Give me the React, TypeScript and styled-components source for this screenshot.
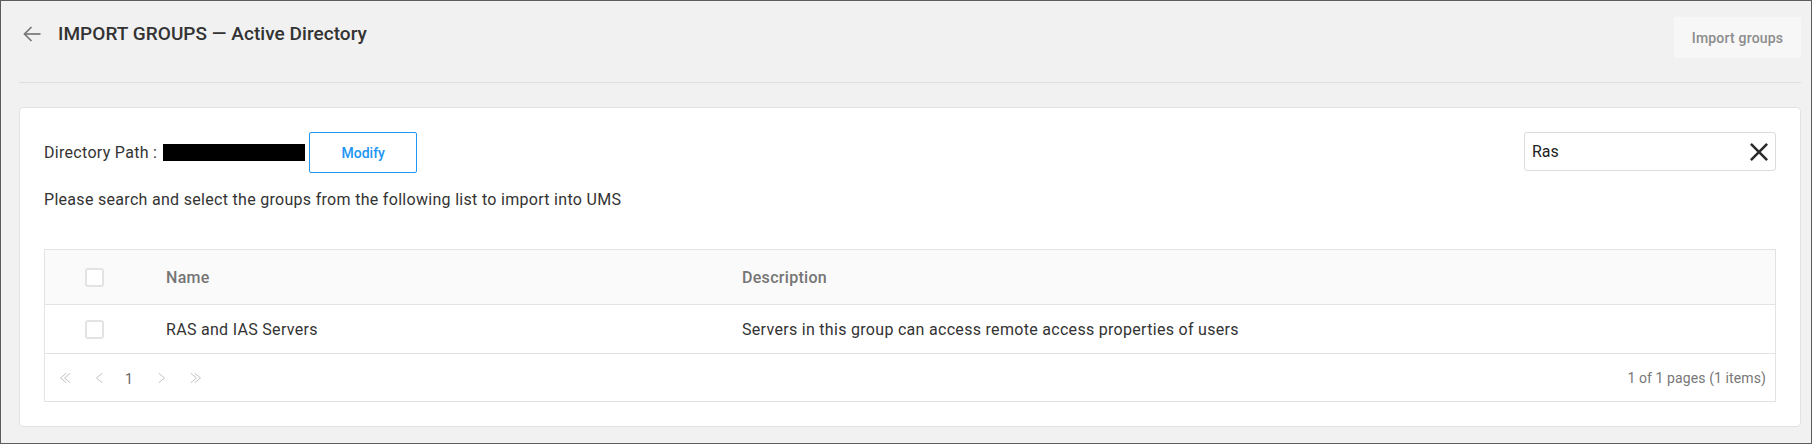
import React from 'react';
import styled, { createGlobalStyle } from 'styled-components';

const GlobalStyle = createGlobalStyle`
  html, body {
    margin: 0;
    padding: 0;
    background: #f1f1f1;
  }
  body {
    font-family: Roboto, "Liberation Sans", Arial, sans-serif;
    color: #333;
  }
`;

const Frame = styled.div`
  width: 1812px;
  height: 444px;
  box-sizing: border-box;
  border: 1px solid #5c5c5c;
  background: #f1f1f1;
  padding: 16px 10px 0 18px;
`;

const Header = styled.div`
  display: flex;
  justify-content: space-between;
  align-items: flex-start;
  height: 41px;
`;

const TitleRow = styled.div`
  display: flex;
  align-items: center;
  gap: 17px;
  margin: 5px 0 0 4px;
  height: 24px;
`;

const BackButton = styled.button`
  border: 0;
  background: none;
  padding: 0;
  width: 18px;
  height: 18px;
  display: flex;
  cursor: pointer;
`;

const Title = styled.h1`
  margin: 0;
  font-size: 19px;
  font-weight: 500;
  letter-spacing: 0.05px;
  line-height: 24px;
  color: #333;
`;

const ImportButton = styled.button`
  width: 127px;
  height: 41px;
  border: 0;
  border-radius: 2px;
  background: #f7f7f8;
  color: #8c8c8c;
  font-family: inherit;
  font-size: 14px;
  letter-spacing: 0.2px;
  font-weight: 500;
  cursor: default;
`;

const Divider = styled.hr`
  margin: 24px 0 0;
  border: 0;
  border-top: 1px solid #dedede;
`;

const Card = styled.section`
  margin-top: 24px;
  background: #fff;
  border: 1px solid #e2e2e2;
  border-radius: 4px;
  padding: 24px 24px 24px;
  letter-spacing: 0.3px;
`;

const TopRow = styled.div`
  display: flex;
  justify-content: space-between;
  align-items: flex-start;
`;

const PathRow = styled.div`
  display: flex;
  align-items: center;
  height: 41px;
  font-size: 16px;
`;

const Redacted = styled.span`
  display: inline-block;
  width: 142px;
  height: 17px;
  margin: 0 4px 0 6px;
  background: #000;
`;

const OutlineButton = styled.button`
  width: 108px;
  height: 41px;
  border: 1px solid #2196f3;
  border-radius: 2px;
  background: #fff;
  color: #2196f3;
  font-family: inherit;
  font-size: 14px;
  letter-spacing: 0;
  font-weight: 500;
`;

const SearchBox = styled.div`
  width: 252px;
  height: 39px;
  box-sizing: border-box;
  border: 1px solid #dcdcdc;
  border-radius: 3px;
  display: flex;
  align-items: center;
  padding: 0 7px 0 7px;
`;

const SearchInput = styled.input`
  flex: 1;
  min-width: 0;
  border: 0;
  outline: none;
  font-family: inherit;
  font-size: 16px;
  color: #222;
  padding: 0;
`;

const ClearButton = styled.button`
  border: 0;
  background: none;
  padding: 0;
  width: 18px;
  height: 18px;
  display: flex;
`;

const Hint = styled.p`
  margin: 17px 0 0;
  font-size: 16px;
  line-height: 20px;
`;

const Table = styled.div`
  margin-top: 39px;
  border: 1px solid #e3e3e3;
`;

const Row = styled.div<{ $head?: boolean }>`
  display: grid;
  grid-template-columns: 121px 576px 1fr;
  align-items: center;
  height: ${({ $head }) => ($head ? '54px' : '48px')};
  border-bottom: 1px solid #e3e3e3;
  background: ${({ $head }) => ($head ? '#fafafa' : '#fff')};
  color: ${({ $head }) => ($head ? '#757575' : '#333')};
  font-size: 16px;
  font-weight: ${({ $head }) => ($head ? 500 : 400)};
`;

const Cell = styled.div`
  padding-left: 0;
`;

const CheckCell = styled.div`
  padding-left: 40px;
  display: flex;
`;

const Checkbox = styled.span`
  display: inline-block;
  width: 19px;
  height: 19px;
  box-sizing: border-box;
  border: 2px solid #e3e3e3;
  border-radius: 3px;
  background: #fff;
`;

const Footer = styled.div`
  display: flex;
  justify-content: space-between;
  align-items: center;
  height: 47px;
  padding: 0 9px 0 15px;
  font-size: 14px;
  letter-spacing: 0.1px;
  color: #777;
`;

const Pager = styled.div`
  display: flex;
  align-items: center;
`;

const PageArrow = styled.span<{ $w: number }>`
  display: flex;
  width: ${({ $w }) => $w}px;
  height: 10px;
  margin-right: 25px;
`;

const PageNum = styled.span`
  color: #666;
  margin: 2px 25px 0 -3px;
`;

const Chevron: React.FC<{ dir: 'l' | 'r'; double?: boolean }> = ({ dir, double }) => {
  const w = double ? 11 : 7;
  const pts = (x: number) =>
    dir === 'l' ? `${x + 6},0 ${x},5 ${x + 6},10` : `${x},0 ${x + 6},5 ${x},10`;
  return (
    <PageArrow $w={w}>
      <svg width={w} height={10} viewBox={`0 0 ${w} 10`} fill="none" stroke="#c4c4c4" strokeWidth="1">
        <polyline points={pts(0.5)} />
        {double && <polyline points={pts(4.5)} />}
      </svg>
    </PageArrow>
  );
};

const App: React.FC = () => {
  return (
    <>
      <GlobalStyle />
      <Frame>
        <Header>
          <TitleRow>
            <BackButton aria-label="Back">
              <svg width="18" height="18" viewBox="0 0 18 18" fill="none" stroke="#777" strokeWidth="1.7">
                <line x1="1.5" y1="9" x2="17.5" y2="9" />
                <polyline points="8.5,2 1.5,9 8.5,16" />
              </svg>
            </BackButton>
            <Title>IMPORT GROUPS — Active Directory</Title>
          </TitleRow>
          <ImportButton>Import groups</ImportButton>
        </Header>
        <Divider />
        <Card>
          <TopRow>
            <PathRow>
              Directory Path :<Redacted />
              <OutlineButton>Modify</OutlineButton>
            </PathRow>
            <SearchBox>
              <SearchInput defaultValue="Ras" />
              <ClearButton aria-label="Clear">
                <svg width="18" height="18" viewBox="5 5 14 14" fill="#2b2b2b">
                  <path d="M19 6.41L17.59 5 12 10.59 6.41 5 5 6.41 10.59 12 5 17.59 6.41 19 12 13.41 17.59 19 19 17.59 13.41 12z" />
                </svg>
              </ClearButton>
            </SearchBox>
          </TopRow>
          <Hint>Please search and select the groups from the following list to import into UMS</Hint>
          <Table>
            <Row $head>
              <CheckCell>
                <Checkbox />
              </CheckCell>
              <Cell>Name</Cell>
              <Cell>Description</Cell>
            </Row>
            <Row>
              <CheckCell>
                <Checkbox />
              </CheckCell>
              <Cell>RAS and IAS Servers</Cell>
              <Cell>Servers in this group can access remote access properties of users</Cell>
            </Row>
            <Footer>
              <Pager>
                <Chevron dir="l" double />
                <Chevron dir="l" />
                <PageNum>1</PageNum>
                <Chevron dir="r" />
                <Chevron dir="r" double />
              </Pager>
              <span>1 of 1 pages (1 items)</span>
            </Footer>
          </Table>
        </Card>
      </Frame>
    </>
  );
};

export default App;
